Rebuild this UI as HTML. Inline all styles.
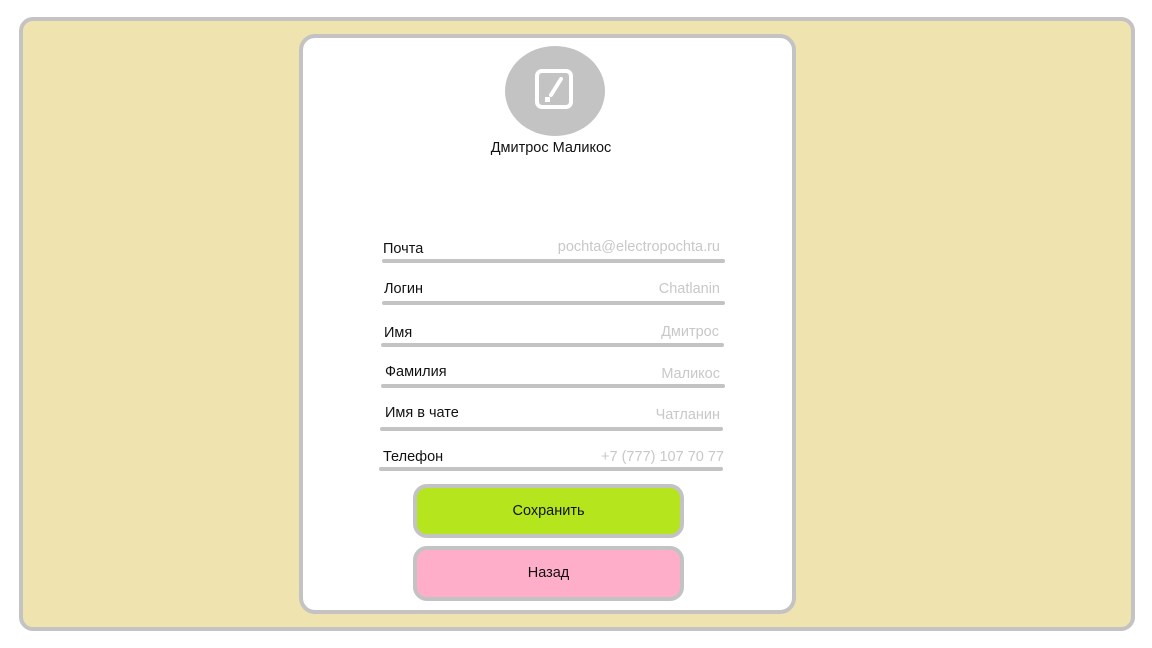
<!DOCTYPE html>
<html><head><meta charset="utf-8"><style>
*{margin:0;padding:0;box-sizing:border-box}
body{width:1152px;height:648px;background:#fff;position:relative;font-family:"Liberation Sans","DejaVu Sans",sans-serif;overflow:hidden}
.abs{position:absolute}
.frame{left:19px;top:17px;width:1116px;height:614px;background:#efe4b0;border:4px solid #c3c3c3;border-radius:14px}
.card{left:299px;top:34px;width:497px;height:580px;background:#fff;border:4px solid #c3c3c3;border-radius:16px}
.av{left:505px;top:46px;width:100px;height:90px;border-radius:50%;background:#c3c3c3}
.name{left:451px;top:140px;width:200px;text-align:center;font-size:14.5px;color:#111}
.lbl{font-size:14.5px;color:#111}
.val{font-size:14.5px;color:#c8c8c8;text-align:right;width:250px}
.line{height:4px;background:#c3c3c3;border-radius:2px}
.btn{left:413px;width:271px;border:4px solid #c3c3c3;border-radius:14px;text-align:center;font-size:14.5px;color:#111}
</style></head><body>
<div class="abs frame"></div>
<div class="abs card"></div>
<div class="abs av"></div>
<svg class="abs" style="left:533px;top:67px" width="44" height="44" viewBox="0 0 44 44">
<rect x="4" y="4" width="34" height="36" rx="5" fill="none" stroke="#fff" stroke-width="4"/>
<line x1="28" y1="12" x2="18" y2="28" stroke="#fff" stroke-width="4" stroke-linecap="round"/>
<rect x="12" y="30" width="5" height="5" fill="#fff"/>
</svg>
<div class="abs name">Дмитрос Маликос</div>

<div class="abs lbl" style="left:383px;top:241px">Почта</div>
<div class="abs val" style="left:470px;top:239px">pochta@electropochta.ru</div>
<div class="abs line" style="left:382px;top:259px;width:343px"></div>

<div class="abs lbl" style="left:384px;top:281px">Логин</div>
<div class="abs val" style="left:470px;top:281px">Chatlanin</div>
<div class="abs line" style="left:382px;top:301px;width:343px"></div>

<div class="abs lbl" style="left:384px;top:325px">Имя</div>
<div class="abs val" style="left:469px;top:324px">Дмитрос</div>
<div class="abs line" style="left:381px;top:343px;width:343px"></div>

<div class="abs lbl" style="left:385px;top:364px">Фамилия</div>
<div class="abs val" style="left:470px;top:366px">Маликос</div>
<div class="abs line" style="left:381px;top:384px;width:344px"></div>

<div class="abs lbl" style="left:385px;top:405px">Имя в чате</div>
<div class="abs val" style="left:470px;top:407px">Чатланин</div>
<div class="abs line" style="left:380px;top:427px;width:343px"></div>

<div class="abs lbl" style="left:383px;top:449px">Телефон</div>
<div class="abs val" style="left:474px;top:449px">+7 (777) 107 70 77</div>
<div class="abs line" style="left:379px;top:467px;width:344px"></div>

<div class="abs btn" style="top:484px;height:54px;line-height:46px;background:#b5e61d">Сохранить</div>
<div class="abs btn" style="top:546px;height:55px;line-height:47px;background:#ffaec9">Назад</div>
</body></html>
